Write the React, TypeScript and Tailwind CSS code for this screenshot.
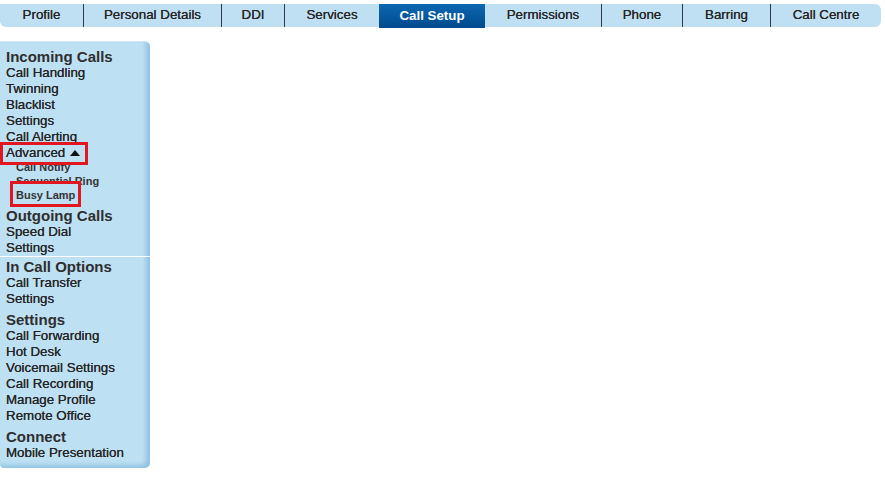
import React from 'react';

const tabs = [
  { label: 'Profile', w: 'w-[84px]' },
  { label: 'Personal Details', w: 'w-[138px]' },
  { label: 'DDI', w: 'w-[63px]' },
  { label: 'Services', w: 'w-[94px]' },
  { label: 'Call Setup', w: 'w-[106px]', active: true },
  { label: 'Permissions', w: 'w-[117px]' },
  { label: 'Phone', w: 'w-[81px]' },
  { label: 'Barring', w: 'w-[88px]' },
  { label: 'Call Centre', w: 'w-[110px]' },
];

function Heading({ children, top = 'mt-[5px]' }: { children: React.ReactNode; top?: string }) {
  return (
    <div className={`${top} text-[15px] leading-[16px] font-bold text-[#2e2e2e]`}>
      {children}
    </div>
  );
}

function Item({ children }: { children: React.ReactNode }) {
  return (
    <div className="text-[13.33px] leading-[16px] text-[#262626] [text-shadow:0_0_0.3px_#262626] cursor-pointer">
      {children}
    </div>
  );
}

function SubItem({ children }: { children: React.ReactNode }) {
  return <div className="pl-[10px] text-[11px] leading-[14px] font-bold text-[#333]">{children}</div>;
}

export default function App() {
  return (
    <div className="min-h-[478px] bg-white pt-[4px] font-['Liberation_Sans',Arial,sans-serif]">
      {/* top tab bar */}
      <div className="flex h-[23px] w-[881px] rounded-r-[6px] rounded-bl-[6px] bg-[#bfe0f2]">
        {tabs.map((t, i) => {
          const next = tabs[i + 1];
          const divider = !t.active && next && !next.active;
          return (
            <div
              key={t.label}
              className={`${t.w} flex items-center justify-center pb-px text-[13.33px] ${
                t.active
                  ? 'h-[24px] bg-gradient-to-b from-[#0e68b2] to-[#004a8c] font-bold text-white'
                  : 'text-[#262626] [text-shadow:0_0_0.3px_#262626]'
              } ${divider ? 'border-r border-[#2d3b48]' : ''}`}
            >
              {t.label}
            </div>
          );
        })}
      </div>

      {/* left menu */}
      <div className="mt-[14px] w-[150px] rounded-r-[5px] rounded-bl-[4px] border-t border-[#cfe8f6] bg-[#bee0f3] pt-[7px] pb-[7px] shadow-[inset_-4px_-3px_4px_rgba(60,140,200,0.35)]">
        <div className="px-[6px]">
          <Heading top="">Incoming Calls</Heading>
          <Item>Call Handling</Item>
          <Item>Twinning</Item>
          <Item>Blacklist</Item>
          <Item>Settings</Item>
          <Item>Call Alerting</Item>
          <div className="relative flex items-center text-[13.33px] leading-[16px] text-[#262626] [text-shadow:0_0_0.3px_#262626]">
            <span className="absolute -top-[3px] -bottom-[4px] -left-[6px] z-10 w-[88px] border-[3px] border-[#e2161f]" />
            <span className="relative z-20">Advanced</span>
            <svg className="relative z-20 ml-[5px]" width="10" height="6" viewBox="0 0 10 6">
              <polygon points="5,0 10,6 0,6" fill="#111" />
            </svg>
          </div>
          <div className="-mt-px">
            <SubItem>Call Notify</SubItem>
            <SubItem>Sequential Ring</SubItem>
          </div>
          <div className="relative pl-[10px] text-[11px] leading-[14px] font-bold text-[#333]">
            <span className="absolute -top-[7px] -bottom-[5px] left-[4px] z-10 w-[71px] border-[3px] border-[#e2161f] bg-[#bee0f3]" />
            <span className="relative z-20">Busy Lamp</span>
          </div>
          <Heading top="mt-[6px]">Outgoing Calls</Heading>
          <Item>Speed Dial</Item>
          <Item>Settings</Item>
        </div>
        <div className="h-px bg-white" />
        <div className="px-[6px] pt-[2px]">
          <Heading top="">In Call Options</Heading>
          <Item>Call Transfer</Item>
          <Item>Settings</Item>
          <Heading>Settings</Heading>
          <Item>Call Forwarding</Item>
          <Item>Hot Desk</Item>
          <Item>Voicemail Settings</Item>
          <Item>Call Recording</Item>
          <Item>Manage Profile</Item>
          <Item>Remote Office</Item>
          <Heading>Connect</Heading>
          <Item>Mobile Presentation</Item>
        </div>
      </div>
    </div>
  );
}
